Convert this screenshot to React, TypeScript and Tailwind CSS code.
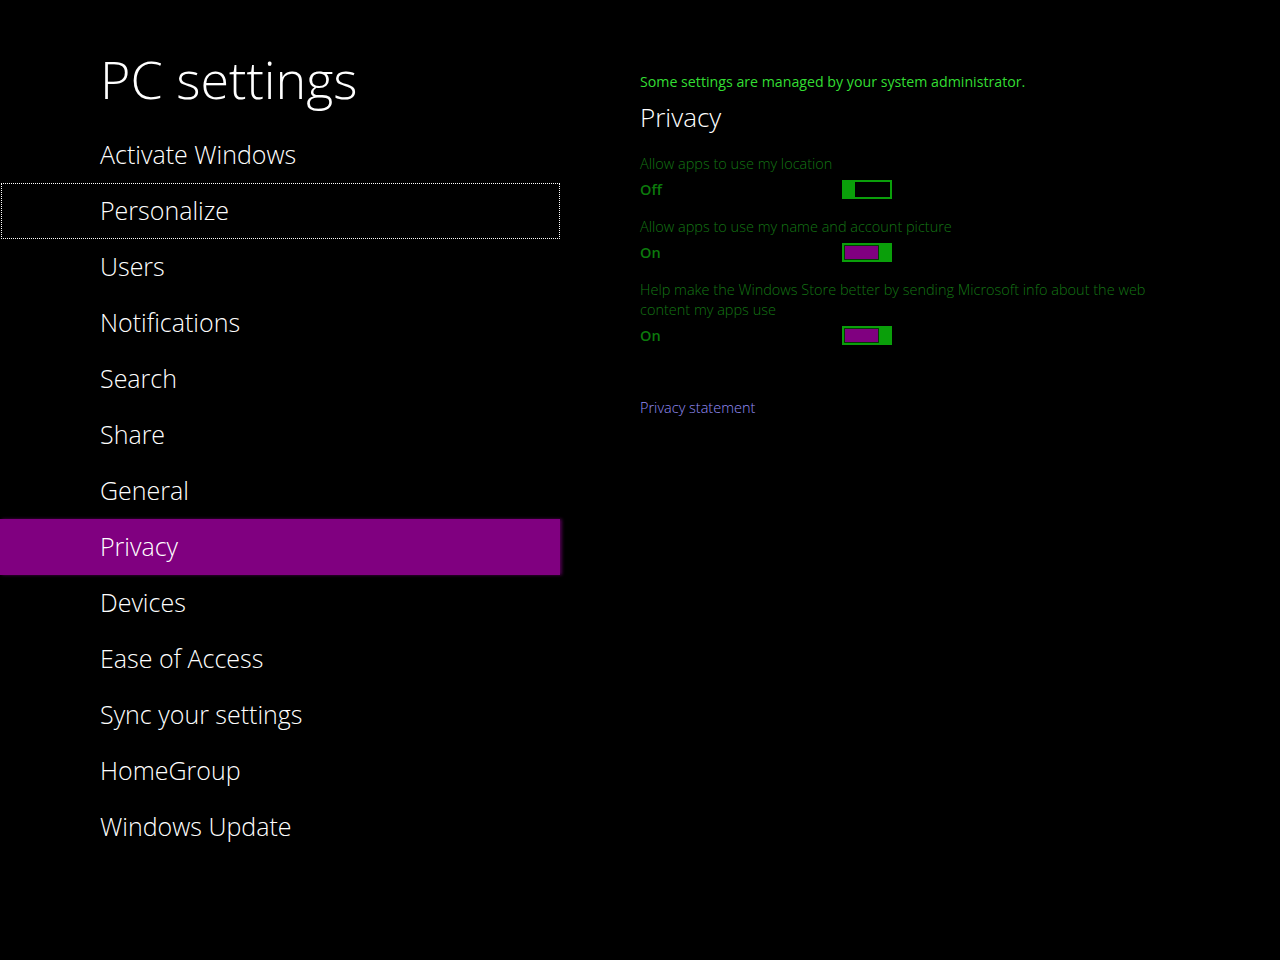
const navItems = [
  'Activate Windows',
  'Personalize',
  'Users',
  'Notifications',
  'Search',
  'Share',
  'General',
  'Privacy',
  'Devices',
  'Ease of Access',
  'Sync your settings',
  'HomeGroup',
  'Windows Update',
];

const Toggle: React.FC<{ on: boolean }> = ({ on }) => {
  if (on) {
    return (
      <div className="flex h-[19px] w-[50px] border-2 border-[#0a9f0a] bg-[#0a9f0a]">
        <div className="flex-1 border border-[#063806] bg-[#800080]" />
        <div className="w-[11px]" />
      </div>
    );
  }
  return (
    <div className="flex h-[19px] w-[50px] border-2 border-[#0a9f0a] bg-black">
      <div className="w-[11px] bg-[#0a9f0a]" />
    </div>
  );
};

const Setting: React.FC<{ label: React.ReactNode; on: boolean }> = ({ label, on }) => {
  return (
    <div className="mt-[18px]">
      <p className="text-[14.5px] leading-[20px] font-light text-[#147414]">{label}</p>
      <div className="mt-[6px] flex h-[19px] items-center">
        <span className="w-[202px] text-[14.5px] font-semibold text-[#0c7a0c]">{on ? 'On' : 'Off'}</span>
        <Toggle on={on} />
      </div>
    </div>
  );
};

export default function App() {
  return (
    <div
      className="flex h-[960px] w-[1280px] bg-black text-white"
      style={{ fontFamily: '"Open Sans", "Noto Sans", sans-serif' }}
    >
      {/* Left nav */}
      <div className="w-[560px] shrink-0 pt-[51px]">
        <h1 className="mb-[20px] pl-[100px] text-[52px] font-light leading-[56px]">PC settings</h1>
        <ul>
          {navItems.map((item) => {
            const selected = item === 'Privacy';
            const focused = item === 'Personalize';
            return (
              <li
                key={item}
                className={
                  'flex h-[56px] items-center text-[25px] font-light ' +
                  (selected ? 'bg-[#800080] pl-[100px] shadow-[2px_0_3px_rgba(128,0,128,0.6)] ' : '') +
                  (focused ? 'ml-px border border-dotted border-white pl-[98px] ' : 'pl-[100px] ')
                }
              >
                {item}
              </li>
            );
          })}
        </ul>
      </div>

      {/* Right content */}
      <div className="pl-[80px] pt-[73px]">
        <p className="text-[14.2px] leading-[18px] text-[#33dd33]">Some settings are managed by your system administrator.</p>
        <h2 className="mt-[10px] text-[26px] font-light leading-[32px]">Privacy</h2>
        <div className="pt-[3px]">
          <Setting label="Allow apps to use my location" on={false} />
          <Setting label="Allow apps to use my name and account picture" on={true} />
          <Setting
            label={
              <>
                Help make the Windows Store better by sending Microsoft info about the web
                <br />
                content my apps use
              </>
            }
            on={true}
          />
        </div>
        <a className="mt-[52px] block text-[14.5px] font-light text-[#938cf5]">Privacy statement</a>
      </div>
    </div>
  );
}
